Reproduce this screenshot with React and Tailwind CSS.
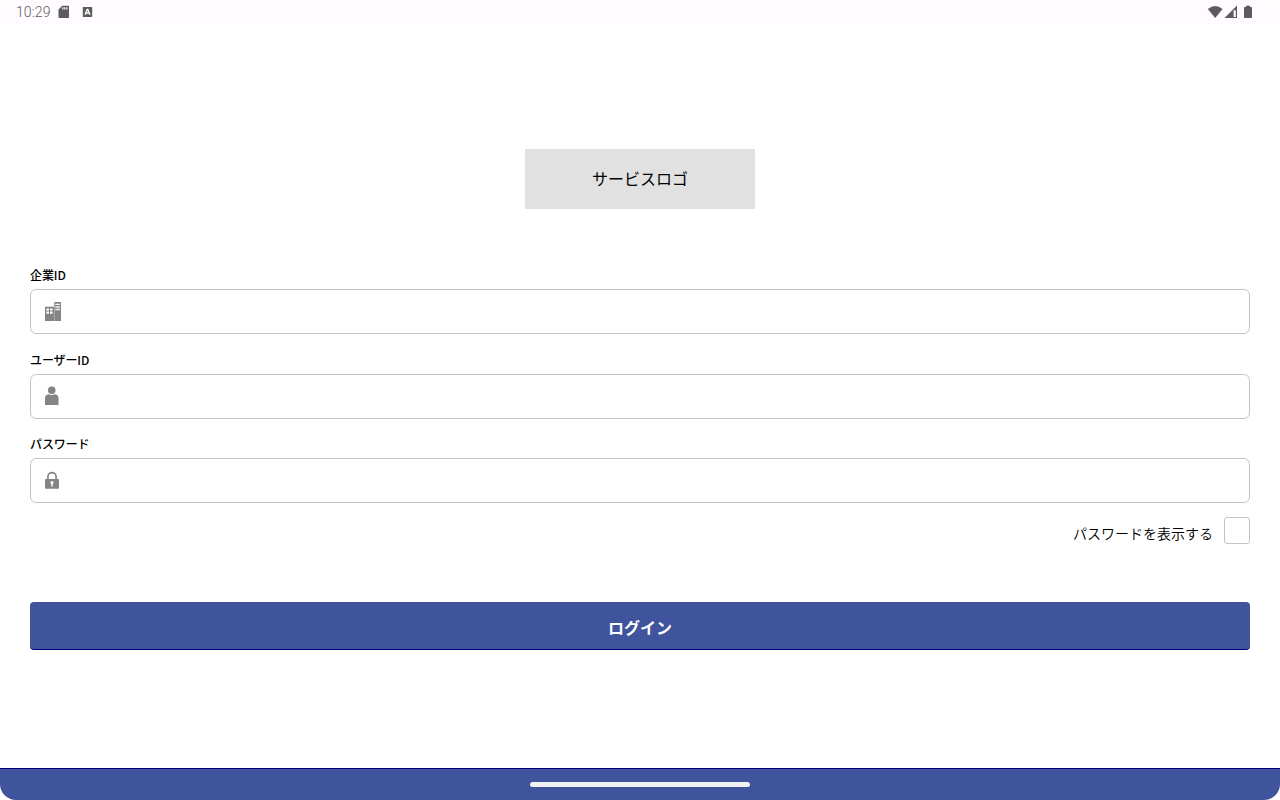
const FIELDS = [
  { id: "company", label: "企業ID", type: "text", Icon: CompanyIcon },
  { id: "user", label: "ユーザーID", type: "text", Icon: UserIcon },
  { id: "password", label: "パスワード", type: "password", Icon: LockIcon },
];

function CompanyIcon() {
  return (
    <svg width="20" height="20" viewBox="0 0 20 20" fill="#848484">
      <path d="M1 4.7H10V19H1Z" />
      <path d="M10.3 0H17V19H10.3Z" />
      <path
        d="M2.4 6.5h2.6v2.1H2.4ZM6 6.5h2.6v2.1H6ZM2.4 9.6h2.6v2.1H2.4ZM6 9.6h2.6v2.1H6Z"
        fill="#fff"
      />
      <path
        d="M11.3 2.4H16M11.3 5H16M11.3 7.5H16"
        stroke="#f0f0f0"
        strokeWidth="1.3"
      />
    </svg>
  );
}

function UserIcon() {
  return (
    <svg width="20" height="20" viewBox="0 0 20 20" fill="#848484">
      <circle cx="7.7" cy="4.3" r="3.8" />
      <path d="M1 19V12.3Q1 8.6 4.5 8.2Q7.7 9.8 11 8.2Q14.5 8.6 14.5 12.3V19Z" />
    </svg>
  );
}

function LockIcon() {
  return (
    <svg width="20" height="20" viewBox="0 0 20 20">
      <path
        d="M3.9 9V5.8a4.1 4.1 0 0 1 8.2 0V9"
        fill="none"
        stroke="#848484"
        strokeWidth="1.7"
      />
      <rect x="1" y="8" width="14" height="9.8" rx="0.8" fill="#848484" />
      <circle cx="8" cy="11.4" r="1.5" fill="#fff" />
      <path d="M7.3 12h1.4v3.5H7.3Z" fill="#fff" />
    </svg>
  );
}

function StatusBar() {
  return (
    <header className="flex h-6 items-center justify-between rounded-t-2xl bg-[#fffbff] pr-[27px] pl-4 text-[#5c5c5e]">
      <div className="flex items-center">
        <span className="w-[42px] font-[Roboto] text-[14px] leading-6 font-light tracking-[0.1px]">
          10:29
        </span>
        <svg width="12" height="14" viewBox="0 0 12 14" fill="currentColor">
          <path
            fillRule="evenodd"
            d="M4.2 0.8H10.3Q11 0.8 11 1.5V12.2Q11 13 10.3 13H1.2Q0.5 13 0.5 12.2V4.5ZM4.2 2.2V4.6H5.4V2.2ZM6.2 2.2V4.6H7.4V2.2ZM8.2 2.2V4.6H9.4V2.2Z"
          />
        </svg>
        <svg
          className="ml-3"
          width="11"
          height="12"
          viewBox="0 0 11 12"
          fill="currentColor"
        >
          <rect x="0.8" y="1" width="9.4" height="10" rx="0.6" />
          <path
            d="M3 8.7L5.2 3.3H5.8L8 8.7M3.9 7H7.1"
            fill="none"
            stroke="#fff"
            strokeWidth="1.3"
          />
        </svg>
      </div>
      <svg width="46" height="14" viewBox="0 0 46 14" fill="currentColor">
        <path d="M0.8 4Q8.2 -2 15.6 4L8.2 13Z" />
        <path fillRule="evenodd" d="M17.5 13L30 0.6V13ZM26.6 5.2V12H28.8V5.2Z" />
        <path d="M39 0.7H43V2H44.2Q45 2 45 2.8V12.2Q45 13 44.2 13H37.8Q37 13 37 12.2V2.8Q37 2 37.8 2H39Z" />
      </svg>
    </header>
  );
}

function Field({ id, label, type, Icon }) {
  return (
    <div className="flex flex-col">
      <label
        htmlFor={id}
        className="h-[18px] text-[12px] leading-[18px] font-medium tracking-[-0.1px]"
      >
        {label}
      </label>
      <div className="mt-[5px] flex h-[45px] items-center rounded-md border border-[#c4c4c4] pl-[13px]">
        <Icon />
        <input id={id} type={type} className="h-full flex-1 outline-none" />
      </div>
    </div>
  );
}

export default function App() {
  return (
    <div className="flex h-[800px] w-[1280px] flex-col overflow-hidden bg-white font-['Noto_Sans_CJK_JP',sans-serif] text-black">
      <StatusBar />
      <main className="flex flex-1 flex-col px-[30px] pt-[125px]">
        <div className="flex h-[60px] w-[230px] items-center justify-center self-center bg-[#e1e1e1] pb-0.5 text-[16px]">
          サービスロゴ
        </div>

        <form className="mt-[57px] flex flex-col">
          <div className="flex flex-col gap-[16.5px]">
            {FIELDS.map((field) => (
              <Field key={field.id} {...field} />
            ))}
          </div>

          <div className="mt-3.5 flex h-[27px] justify-end gap-[11px]">
            <label
              htmlFor="show"
              className="pt-1.5 text-[14px] leading-5 font-[350]"
            >
              パスワードを表示する
            </label>
            <input
              id="show"
              type="checkbox"
              className="h-[27px] w-[26px] appearance-none rounded-[3px] border border-[#c4c4c4]"
            />
          </div>

          <button
            type="button"
            className="mt-[58px] h-12 rounded-[4px] border-b border-[#00007c] bg-[#40539d] pt-0.5 text-[16px] font-bold text-white"
          >
            ログイン
          </button>
        </form>
      </main>
      <footer className="flex h-8 items-center justify-center rounded-b-2xl border-t border-[#00007c] bg-[#40539d] pb-px">
        <div className="h-[5px] w-[220px] rounded-full bg-[#f1f2f8]" />
      </footer>
    </div>
  );
}
